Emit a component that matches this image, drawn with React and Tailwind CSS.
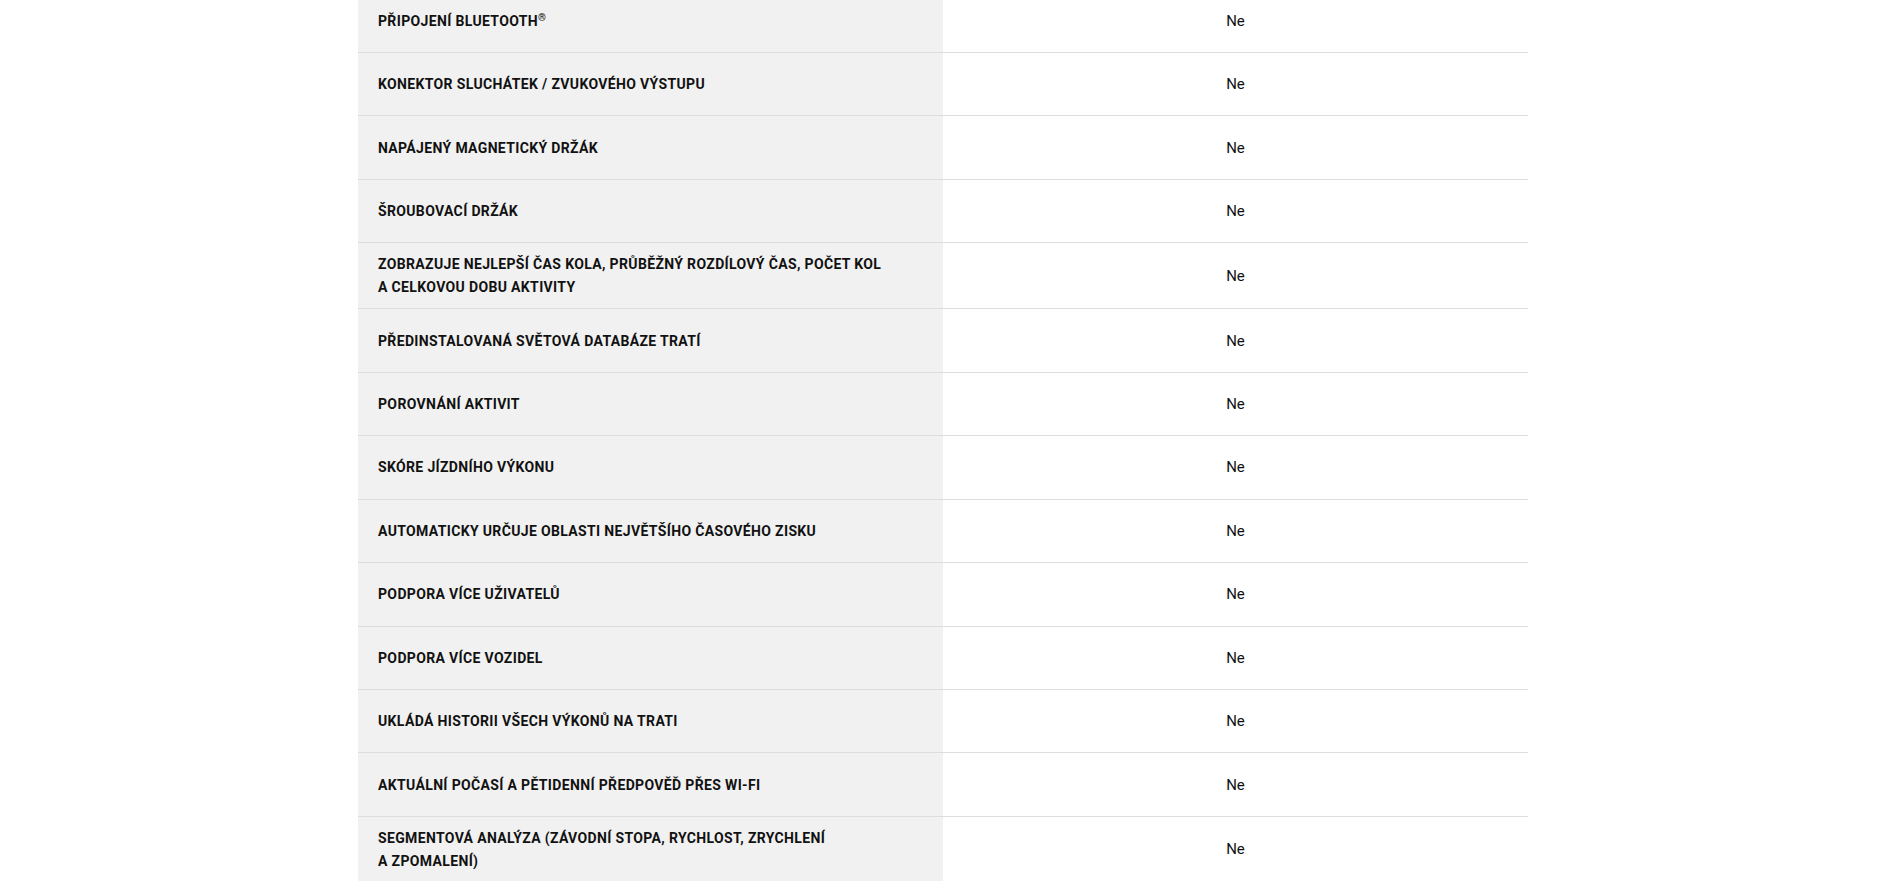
import React from "react";

// Specification rows (feature name -> value)
const specs = [
  ["PŘIPOJENÍ BLUETOOTH", "®"],
  "KONEKTOR SLUCHÁTEK / ZVUKOVÉHO VÝSTUPU",
  "NAPÁJENÝ MAGNETICKÝ DRŽÁK",
  "ŠROUBOVACÍ DRŽÁK",
  ["ZOBRAZUJE NEJLEPŠÍ ČAS KOLA, PRŮBĚŽNÝ ROZDÍLOVÝ ČAS, POČET KOL", "A CELKOVOU DOBU AKTIVITY"],
  "PŘEDINSTALOVANÁ SVĚTOVÁ DATABÁZE TRATÍ",
  "POROVNÁNÍ AKTIVIT",
  "SKÓRE JÍZDNÍHO VÝKONU",
  "AUTOMATICKY URČUJE OBLASTI NEJVĚTŠÍHO ČASOVÉHO ZISKU",
  "PODPORA VÍCE UŽIVATELŮ",
  "PODPORA VÍCE VOZIDEL",
  "UKLÁDÁ HISTORII VŠECH VÝKONŮ NA TRATI",
  "AKTUÁLNÍ POČASÍ A PĚTIDENNÍ PŘEDPOVĚĎ PŘES WI-FI",
  ["SEGMENTOVÁ ANALÝZA (ZÁVODNÍ STOPA, RYCHLOST, ZRYCHLENÍ", "A ZPOMALENÍ)"],
];

const SpecRow = ({ label, value }) => {
  // the bluetooth row carries a trademark sign instead of a second line
  const isMark = Array.isArray(label) && label[1] === "®";
  const lines = Array.isArray(label) && !isMark ? label : [isMark ? label[0] : label];
  return (
    <div className="grid grid-cols-2 min-h-[63.45px] border-b border-[#dddddd]">
      <div className="bg-[#f1f1f1] pl-5 pr-10 pt-[10px] pb-[9px] flex flex-col justify-center text-[14px] leading-[23px] font-bold tracking-[0.35px] text-[#111]">
        {lines.map((line, i) => (
          <span key={i}>
            {line}
            {isMark && <sup className="text-[10px] top-[-0.45em]">®</sup>}
          </span>
        ))}
      </div>
      <div className="flex items-center justify-center text-[15px] leading-[22px] text-[#111]">
        {value}
      </div>
    </div>
  );
};

export default function App() {
  return (
    <div className="min-h-screen bg-white overflow-hidden" style={{ fontFamily: "Roboto, 'Liberation Sans', sans-serif" }}>
      <div className="w-[1170px] ml-[358px] -mt-[10.4px]">
        {specs.map((label, i) => (
          <SpecRow key={i} label={label} value="Ne" />
        ))}
      </div>
    </div>
  );
}
